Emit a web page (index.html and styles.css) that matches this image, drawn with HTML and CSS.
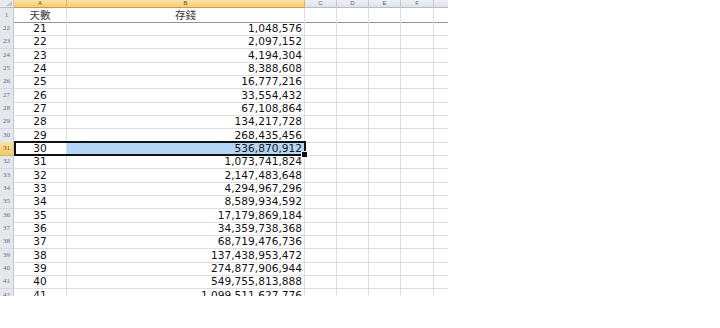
FILE: index.html
```html
<!DOCTYPE html>
<html lang="zh-Hant">
<head>
    <meta charset="UTF-8">
    <title>存錢</title>
    <link rel="stylesheet" href="styles.css">
</head>
<body>
    <div class="sheet">
        <div class="row cols">
            <div class="corner"></div>
            <div class="ch on">A</div>
            <div class="ch on">B</div>
            <div class="ch">C</div>
            <div class="ch">D</div>
            <div class="ch">E</div>
            <div class="ch">F</div>
            <div class="ch"></div>
        </div>
        <div class="row head">
            <div class="rh">1</div>
            <div class="c a title">天數</div>
            <div class="c b title">存錢</div>
            <div class="c"></div><div class="c"></div><div class="c"></div><div class="c"></div><div class="c"></div>
        </div>
        <div class="row"><div class="rh">22</div><div class="c a">21</div><div class="c b">1,048,576</div><div class="c"></div><div class="c"></div><div class="c"></div><div class="c"></div><div class="c"></div></div>
        <div class="row"><div class="rh">23</div><div class="c a">22</div><div class="c b">2,097,152</div><div class="c"></div><div class="c"></div><div class="c"></div><div class="c"></div><div class="c"></div></div>
        <div class="row"><div class="rh">24</div><div class="c a">23</div><div class="c b">4,194,304</div><div class="c"></div><div class="c"></div><div class="c"></div><div class="c"></div><div class="c"></div></div>
        <div class="row"><div class="rh">25</div><div class="c a">24</div><div class="c b">8,388,608</div><div class="c"></div><div class="c"></div><div class="c"></div><div class="c"></div><div class="c"></div></div>
        <div class="row"><div class="rh">26</div><div class="c a">25</div><div class="c b">16,777,216</div><div class="c"></div><div class="c"></div><div class="c"></div><div class="c"></div><div class="c"></div></div>
        <div class="row"><div class="rh">27</div><div class="c a">26</div><div class="c b">33,554,432</div><div class="c"></div><div class="c"></div><div class="c"></div><div class="c"></div><div class="c"></div></div>
        <div class="row"><div class="rh">28</div><div class="c a">27</div><div class="c b">67,108,864</div><div class="c"></div><div class="c"></div><div class="c"></div><div class="c"></div><div class="c"></div></div>
        <div class="row"><div class="rh">29</div><div class="c a">28</div><div class="c b">134,217,728</div><div class="c"></div><div class="c"></div><div class="c"></div><div class="c"></div><div class="c"></div></div>
        <div class="row"><div class="rh">30</div><div class="c a">29</div><div class="c b">268,435,456</div><div class="c"></div><div class="c"></div><div class="c"></div><div class="c"></div><div class="c"></div></div>
        <div class="row selected">
            <div class="rh on">31</div><div class="c a">30</div><div class="c b picked">536,870,912</div><div class="c"></div><div class="c"></div><div class="c"></div><div class="c"></div><div class="c"></div>
            <div class="selbox"><span class="handle"></span></div>
        </div>
        <div class="row"><div class="rh">32</div><div class="c a">31</div><div class="c b">1,073,741,824</div><div class="c"></div><div class="c"></div><div class="c"></div><div class="c"></div><div class="c"></div></div>
        <div class="row"><div class="rh">33</div><div class="c a">32</div><div class="c b">2,147,483,648</div><div class="c"></div><div class="c"></div><div class="c"></div><div class="c"></div><div class="c"></div></div>
        <div class="row"><div class="rh">34</div><div class="c a">33</div><div class="c b">4,294,967,296</div><div class="c"></div><div class="c"></div><div class="c"></div><div class="c"></div><div class="c"></div></div>
        <div class="row"><div class="rh">35</div><div class="c a">34</div><div class="c b">8,589,934,592</div><div class="c"></div><div class="c"></div><div class="c"></div><div class="c"></div><div class="c"></div></div>
        <div class="row"><div class="rh">36</div><div class="c a">35</div><div class="c b">17,179,869,184</div><div class="c"></div><div class="c"></div><div class="c"></div><div class="c"></div><div class="c"></div></div>
        <div class="row"><div class="rh">37</div><div class="c a">36</div><div class="c b">34,359,738,368</div><div class="c"></div><div class="c"></div><div class="c"></div><div class="c"></div><div class="c"></div></div>
        <div class="row"><div class="rh">38</div><div class="c a">37</div><div class="c b">68,719,476,736</div><div class="c"></div><div class="c"></div><div class="c"></div><div class="c"></div><div class="c"></div></div>
        <div class="row"><div class="rh">39</div><div class="c a">38</div><div class="c b">137,438,953,472</div><div class="c"></div><div class="c"></div><div class="c"></div><div class="c"></div><div class="c"></div></div>
        <div class="row"><div class="rh">40</div><div class="c a">39</div><div class="c b">274,877,906,944</div><div class="c"></div><div class="c"></div><div class="c"></div><div class="c"></div><div class="c"></div></div>
        <div class="row"><div class="rh">41</div><div class="c a">40</div><div class="c b">549,755,813,888</div><div class="c"></div><div class="c"></div><div class="c"></div><div class="c"></div><div class="c"></div></div>
        <div class="row"><div class="rh">42</div><div class="c a">41</div><div class="c b">1,099,511,627,776</div><div class="c"></div><div class="c"></div><div class="c"></div><div class="c"></div><div class="c"></div></div>
    </div>
</body>
</html>
```

FILE: styles.css
```css
body {
    margin: 0;
    background: #fff;
    font-family: "DejaVu Sans", "Noto Sans CJK TC", sans-serif;
}

.sheet {
    width: 448px;
    height: 296px;
    overflow: hidden;
}

.row {
    display: grid;
    grid-template-columns: 14px 53px 238px 32px 32px 32px 33px 15px;
    height: 13.333px;
}

.cols {
    height: 8px;
}

.head {
    height: 14px;
}

.corner {
    background: #e6e9ee;
    border-right: 1px solid #c6cbd1;
    border-bottom: 1px solid #b8bec6;
    box-sizing: border-box;
    position: relative;
}

.corner::after {
    content: "";
    position: absolute;
    right: 1px;
    bottom: 1px;
    border-left: 6px solid transparent;
    border-bottom: 5px solid #c4c8ce;
}

.ch {
    background: linear-gradient(#eef0f3, #dfe3e8);
    border-right: 1px solid #c6cbd1;
    border-bottom: 1px solid #b8bec6;
    box-sizing: border-box;
    font-family: "Liberation Sans", sans-serif;
    font-size: 6px;
    line-height: 7px;
    color: #5a6472;
    text-align: center;
}

.ch.on {
    background: linear-gradient(#fbe2a8, #f5cd72);
    border-right-color: #d9b76a;
    border-bottom-color: #c79f48;
    color: #6b5424;
}

.rh {
    background: #e4e7ec;
    border-right: 1px solid #c3c8ce;
    border-bottom: 1px solid #d4d8dd;
    box-sizing: border-box;
    font-family: "Liberation Serif", serif;
    font-size: 7px;
    line-height: 13px;
    color: #6a707a;
    text-align: center;
}

.rh.on {
    background: linear-gradient(#fbe0a3, #f4c967);
    border-bottom-color: #d9b76a;
    color: #6b5424;
}

.head .rh {
    line-height: 14px;
    border-bottom: 1px solid #8f959c;
}

.c {
    border-right: 1px solid #dcdee1;
    border-bottom: 1px solid #dcdee1;
    box-sizing: border-box;
    overflow: hidden;
    white-space: nowrap;
    font-size: 10.6px;
    line-height: 13px;
    color: #111;
}

.head .c {
    border-bottom: 1px solid #8f959c;
    line-height: 14px;
}

.a {
    text-align: center;
}

.b {
    text-align: right;
    padding-right: 2px;
    overflow: visible;
}

.title {
    font-family: "Noto Sans CJK TC", sans-serif;
    font-size: 10.5px;
    color: #3a3a3a;
}

.title.b {
    text-align: center;
    padding-right: 0;
}

.selected {
    position: relative;
}

.picked {
    background: #b5d5f6;
}

.selbox {
    position: absolute;
    left: 14px;
    top: -1px;
    width: 292px;
    height: 15.5px;
    border: 2px solid #111;
    box-sizing: border-box;
    pointer-events: none;
}

.handle {
    position: absolute;
    right: -4px;
    bottom: -4px;
    width: 5px;
    height: 5px;
    background: #111;
    border: 1px solid #fff;
}
```
